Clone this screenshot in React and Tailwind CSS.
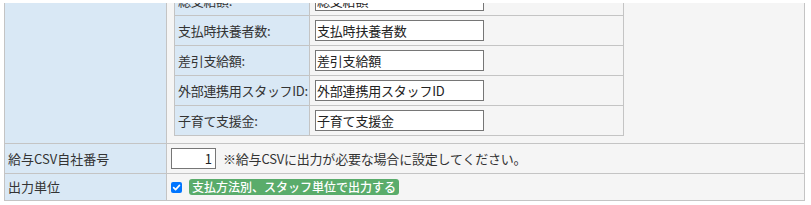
import React from "react";

const font = { fontFamily: '"Noto Sans CJK JP", "Noto Sans", sans-serif' };

const innerRows = [
  { label: "基本給:", value: "基本給" },
  { label: "残業手当:", value: "残業手当" },
  { label: "通勤手当:", value: "通勤手当" },
  { label: "控除合計:", value: "控除合計" },
  { label: "総支給額:", value: "総支給額" },
  { label: "支払時扶養者数:", value: "支払時扶養者数" },
  { label: "差引支給額:", value: "差引支給額" },
  { label: "外部連携用スタッフID:", value: "外部連携用スタッフID" },
  { label: "子育て支援金:", value: "子育て支援金" },
];

function InnerRow({ label, value }) {
  return (
    <div className="flex h-[30px] border-b border-[#c4c4c4]">
      <div className="flex w-[135px] items-center overflow-hidden whitespace-nowrap border-r border-[#c4c4c4] bg-[#d9e8f5] pl-[3px] text-[13px] tracking-[-0.3px] text-[#333]">
        {label}
      </div>
      <div className="flex flex-1 items-center bg-[#f5f5f5] pl-[5px]">
        <input
          type="text"
          defaultValue={value}
          className="h-[21px] w-[169px] border border-[#767676] bg-white px-[1px] text-[13px] tracking-[-0.2px] text-[#222] outline-none"
        />
      </div>
    </div>
  );
}

export default function App() {
  return (
    <div className="h-[205px] w-[811px] overflow-hidden bg-white pt-[3px]" style={font}>
      <div className="flex h-[198px] flex-col justify-end overflow-hidden pl-[4px]">
        <div className="w-[801px] shrink-0 border-x border-[#c4c4c4]">
          <div className="flex border-b border-[#c4c4c4]">
            <div className="flex w-[162px] items-start border-r border-[#c4c4c4] bg-[#d9e8f5] pl-[3px] pt-[7px] text-[13px] text-[#333]">
              明細出力項目名
            </div>
            <div className="flex-1 bg-[#f5f5f5] pb-[7px] pl-[7px] pt-[7px]">
              <div className="w-[450px] border-x border-t border-[#c4c4c4]">
                {innerRows.map((r) => (
                  <InnerRow key={r.label} {...r} />
                ))}
              </div>
            </div>
          </div>

          <div className="flex h-[30px] border-b border-[#c4c4c4]">
            <div className="flex w-[162px] items-center border-r border-[#c4c4c4] bg-[#d9e8f5] pl-[3px] text-[13px] text-[#333]">
              給与CSV自社番号
            </div>
            <div className="flex flex-1 items-center gap-[7px] bg-[#f5f5f5] pl-[4px]">
              <input
                type="text"
                defaultValue="1"
                className="h-[21px] w-[45px] border border-[#767676] bg-white px-[3px] text-right text-[13px] text-[#222] outline-none"
              />
              <span className="text-[13px] tracking-[-0.2px] text-[#333]">
                ※給与CSVに出力が必要な場合に設定してください。
              </span>
            </div>
          </div>

          <div className="flex h-[27px] border-b border-[#c4c4c4]">
            <div className="flex w-[162px] items-center border-r border-[#c4c4c4] bg-[#d9e8f5] pl-[3px] text-[13px] text-[#333]">
              出力単位
            </div>
            <div className="flex flex-1 items-center gap-[7px] bg-[#f5f5f5] pl-[4px]">
              <span className="flex h-[11px] w-[11px] items-center justify-center rounded-[2px] bg-[#0075ff]">
                <svg width="9" height="9" viewBox="0 0 10 10" fill="none">
                  <path d="M1.8 5.2 L4 7.4 L8.3 2.6" stroke="white" strokeWidth="1.8" strokeLinecap="round" strokeLinejoin="round" />
                </svg>
              </span>
              <span className="flex h-[16px] items-center rounded-[3px] bg-[#5aac6b] px-[3px] text-[12px] font-medium leading-none text-white">
                支払方法別、スタッフ単位で出力する
              </span>
            </div>
          </div>
        </div>
      </div>
    </div>
  );
}
